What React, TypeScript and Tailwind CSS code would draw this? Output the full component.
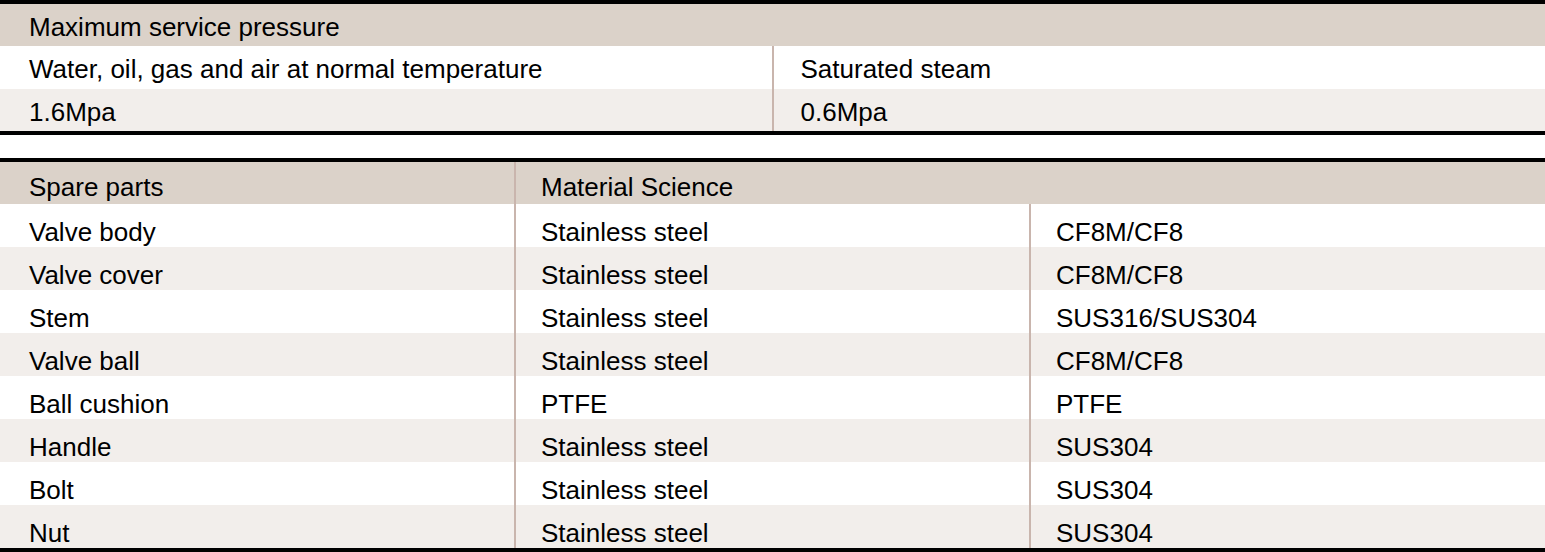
import React from 'react';

const parts: [string, string, string][] = [
  ['Valve body', 'Stainless steel', 'CF8M/CF8'],
  ['Valve cover', 'Stainless steel', 'CF8M/CF8'],
  ['Stem', 'Stainless steel', 'SUS316/SUS304'],
  ['Valve ball', 'Stainless steel', 'CF8M/CF8'],
  ['Ball cushion', 'PTFE', 'PTFE'],
  ['Handle', 'Stainless steel', 'SUS304'],
  ['Bolt', 'Stainless steel', 'SUS304'],
  ['Nut', 'Stainless steel', 'SUS304'],
];

const cell = 'p-0 pl-[29px] text-left align-middle font-normal';
const divided = 'p-0 pl-[25px] text-left align-middle font-normal border-l-2 border-[#c9b5ad]';

export default function App() {
  return (
    <div className="w-[1545px] bg-white text-black text-[26px] leading-none font-['Liberation_Sans',Arial,sans-serif]">
      <div className="border-y-4 border-black">
        <table className="w-full border-collapse table-fixed">
          <thead>
            <tr className="h-[42px] bg-[#dbd2c9]">
              <th colSpan={2} className={`${cell} pt-[4px]`}>
                Maximum service pressure
              </th>
            </tr>
          </thead>
          <tbody>
            <tr className="h-[43px] bg-white">
              <td className={`${cell} pt-[2px] w-[774px]`}>Water, oil, gas and air at normal temperature</td>
              <td className={`${divided} pt-[2px] pl-[27px]`}>Saturated steam</td>
            </tr>
            <tr className="h-[42px] bg-[#f2eeeb]">
              <td className={`${cell} pt-[4px]`}>1.6Mpa</td>
              <td className={`${divided} pt-[4px] pl-[27px]`}>0.6Mpa</td>
            </tr>
          </tbody>
        </table>
      </div>

      <div className="mt-[23px] border-y-4 border-black">
        <table className="w-full border-collapse table-fixed">
          <thead>
            <tr className="h-[42px] bg-[#dbd2c9]">
              <th className={`${cell} pt-[8px] w-[515px]`}>Spare parts</th>
              <th colSpan={2} className={`${divided} pt-[8px]`}>
                Material Science
              </th>
            </tr>
          </thead>
          <tbody>
            {parts.map(([name, material, grade], i) => (
              <tr key={name} className={`h-[43px] ${i % 2 === 0 ? 'bg-white' : 'bg-[#f2eeeb]'}`}>
                <td className={`${cell} pt-[12px]`}>{name}</td>
                <td className={`${divided} pt-[12px] w-[513px]`}>{material}</td>
                <td className={`${divided} pt-[12px]`}>{grade}</td>
              </tr>
            ))}
          </tbody>
        </table>
      </div>
    </div>
  );
}
